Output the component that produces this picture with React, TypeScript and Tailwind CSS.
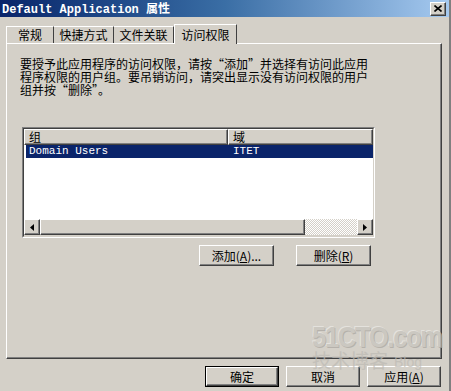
import React from 'react';

const cjk = "font-['SimSun','Noto_Sans_CJK_SC',sans-serif]";

const raised =
  'border border-t-white border-l-white border-r-[#404040] border-b-[#404040] shadow-[inset_-1px_-1px_0_#808080,inset_1px_1px_0_#d4d0c8]';

const Btn: React.FC<{ label: React.ReactNode; w?: string; isDefault?: boolean }> = ({ label, w = 'w-[75px]', isDefault }) => (
  <div className={`${w} h-[21px] ${isDefault ? 'border border-black p-0' : ''}`}>
    <div className={`w-full h-full bg-[#d4d0c8] ${raised} flex items-center justify-center text-[12px] leading-none whitespace-nowrap text-black ${cjk}`}>
      {label}
    </div>
  </div>
);

const Arrow: React.FC<{ dir: 'left' | 'right' }> = ({ dir }) => (
  <div className={`w-[16px] h-[16px] bg-[#d4d0c8] ${raised} flex items-center justify-center`}>
    <svg width="4" height="7" viewBox="0 0 4 7">
      {dir === 'left' ? <path d="M4 0 L0 3.5 L4 7 Z" fill="#000" /> : <path d="M0 0 L4 3.5 L0 7 Z" fill="#000" />}
    </svg>
  </div>
);

export default function App() {
  const tabs = [
    { t: '常规', w: 'w-[48px] border-l border-l-white' },
    { t: '快捷方式', w: 'w-[60px]' },
    { t: '文件关联', w: 'w-[60px]' },
  ];

  return (
    <div className="relative w-[451px] h-[391px] overflow-hidden bg-[#d4d0c8] border-r-2 border-r-[#808080]">
      {/* title bar */}
      <div className="h-[17px] flex items-center justify-between pl-[2px] pr-[3px] bg-gradient-to-r from-[#0a246a] via-[#3a6ea5] to-[#a6caf0]">
        <span className="text-white font-bold text-[12px] leading-none whitespace-nowrap font-['Liberation_Mono',monospace]">
          Default Application <span className={cjk}>属性</span>
        </span>
        <div className={`w-[16px] h-[14px] bg-[#d4d0c8] ${raised} flex items-center justify-center`}>
          <svg width="8" height="7" viewBox="0 0 8 7">
            <path d="M0.5 0.5 L7.5 6.5 M7.5 0.5 L0.5 6.5" stroke="#000" strokeWidth="1.6" />
          </svg>
        </div>
      </div>

      <div className="pl-[6px] pt-[6px]">
        {/* tabs */}
        <div className="flex items-end h-[20px]">
          {tabs.map((x) => (
            <div
              key={x.t}
              className={`h-[17px] ${x.w} flex items-center justify-center whitespace-nowrap text-[12px] leading-none text-black ${cjk} border-t border-t-white border-r border-r-[#404040]`}
            >
              {x.t}
            </div>
          ))}
          <div className={`relative h-[20px] w-[63px] mb-[-1px] z-10 bg-[#d4d0c8] flex items-center justify-center whitespace-nowrap text-[12px] leading-none text-black ${cjk} border-t border-t-white border-l border-l-white border-r border-r-[#404040]`}>
            访问权限
          </div>
        </div>

        {/* panel */}
        <div className="w-[436px] h-[316px] border border-t-white border-l-white border-r-[#404040] border-b-[#404040] shadow-[inset_-1px_-1px_0_#808080] pl-[13px] pt-[13px]">
          <p className={`text-[12px] leading-[13px] text-black ${cjk} whitespace-nowrap`}>
            要授予此应用程序的访问权限，请按“添加”并选择有访问此应用
            <br />
            程序权限的用户组。要吊销访问，请突出显示没有访问权限的用户
            <br />
            组并按“删除”。
          </p>

          {/* list */}
          <div className="mt-[31px] ml-[2px] w-[353px] h-[111px] border border-t-[#808080] border-l-[#808080] border-r-white border-b-white">
            <div className="w-full h-full border border-t-[#404040] border-l-[#404040] border-r-[#d4d0c8] border-b-[#d4d0c8] bg-white flex flex-col">
              <div className="flex h-[16px]">
                <div className={`w-[204px] bg-[#d4d0c8] ${raised} flex items-center pl-[4px] text-[12px] leading-none ${cjk}`}>组</div>
                <div className={`flex-1 bg-[#d4d0c8] ${raised} flex items-center pl-[4px] text-[12px] leading-none ${cjk}`}>域</div>
              </div>
              <div className="h-[13px] bg-[#0a246a] flex items-center text-white text-[11px] leading-none font-['Liberation_Mono',monospace] relative">
                <div className="absolute left-0 top-0 w-[2px] h-[13px] bg-white" />
                <span className="w-[204px] pl-[5px]">Domain Users</span>
                <span className="pl-[5px]">ITET</span>
              </div>
              <div className="flex-1" />
              {/* h scrollbar */}
              <div className="h-[17px] flex bg-[#d4d0c8]">
                <Arrow dir="left" />
                <div className={`w-[265px] h-[16px] bg-[#d4d0c8] ${raised}`} />
                <div className="flex-1 h-[16px] bg-[repeating-conic-gradient(#d4d0c8_0_25%,#ffffff_0_50%)] bg-[length:2px_2px]" />
                <Arrow dir="right" />
              </div>
            </div>
          </div>

          <div className="flex gap-[22px] mt-[7px] ml-[179px]">
            <Btn label={<span>添加(<u>A</u>)...</span>} />
            <Btn label={<span>删除(<u>R</u>)</span>} />
          </div>
        </div>

        {/* footer buttons */}
        <div className="flex gap-[7px] mt-[7px] ml-[199px]">
          <Btn label="确定" w="w-[74px]" isDefault />
          <Btn label="取消" w="w-[74px]" />
          <Btn label={<span>应用(<u>A</u>)</span>} w="w-[74px]" />
        </div>
      </div>

      {/* watermark */}
      <div className="absolute left-[312px] top-[322px] pointer-events-none select-none opacity-70">
        <div className="text-[30px] leading-[30px] font-bold text-[#c8c5bf] font-['Liberation_Sans',sans-serif] tracking-[-1.5px] [text-shadow:1px_1px_0_#a8a59f,-1px_-1px_0_#ecebe7] scale-x-[0.85] origin-left">
          51CTO.com
        </div>
        <div className="flex items-end gap-[6px] -mt-[2px]">
          <span className={`text-[19px] leading-[20px] text-[#bdbab4] ${cjk}`}>技术博客</span>
          <span className="text-[14px] leading-[16px] text-[#bdbab4] font-['Liberation_Sans',sans-serif]">Blog</span>
        </div>
      </div>
    </div>
  );
}
